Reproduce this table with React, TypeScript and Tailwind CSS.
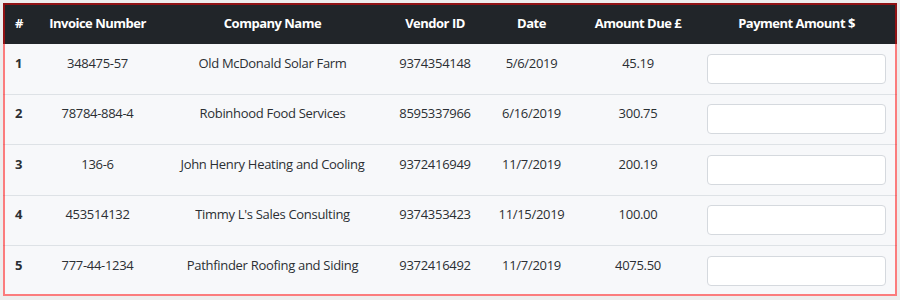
import React from "react";

const rows = [
  { n: 1, inv: "348475-57", company: "Old McDonald Solar Farm", vendor: "9374354148", date: "5/6/2019", amount: "45.19" },
  { n: 2, inv: "78784-884-4", company: "Robinhood Food Services", vendor: "8595337966", date: "6/16/2019", amount: "300.75" },
  { n: 3, inv: "136-6", company: "John Henry Heating and Cooling", vendor: "9372416949", date: "11/7/2019", amount: "200.19" },
  { n: 4, inv: "453514132", company: "Timmy L's Sales Consulting", vendor: "9374353423", date: "11/15/2019", amount: "100.00" },
  { n: 5, inv: "777-44-1234", company: "Pathfinder Roofing and Siding", vendor: "9372416492", date: "11/7/2019", amount: "4075.50" },
];

export default function App() {
  return (
    <div
      className="w-[900px] h-[300px] bg-[#ededed] p-[3px] overflow-hidden"
      style={{ fontFamily: '"Open Sans", "Noto Sans", sans-serif' }}
    >
      <table className="w-[894px] table-fixed border-collapse text-[13px] leading-[19.5px] text-[#2b2f33] bg-[#f7f8fa] outline-2 outline-[rgba(255,0,0,0.5)] -outline-offset-2">
        <colgroup>
          <col className="w-[32px]" />
          <col className="w-[125px]" />
          <col className="w-[225px]" />
          <col className="w-[100px]" />
          <col className="w-[93px]" />
          <col className="w-[120px]" />
          <col className="w-[199px]" />
        </colgroup>
        <thead>
          <tr className="bg-[#212529] text-white h-[41px] tracking-[-0.5px]">
            <th className="pl-[12px] text-left font-bold pt-[1px]">#</th>
            <th className="text-center font-bold pt-[1px]">Invoice Number</th>
            <th className="text-center font-bold pt-[1px]">Company Name</th>
            <th className="text-center font-bold pt-[1px]">Vendor ID</th>
            <th className="text-center font-bold pt-[1px]">Date</th>
            <th className="text-center font-bold pt-[1px]">Amount Due £</th>
            <th className="text-center font-bold pt-[1px] pr-[2px]">Payment Amount $</th>
          </tr>
        </thead>
        <tbody className="tracking-[-0.3px]">
          {rows.map((r, i) => (
            <tr key={r.n} className={i < rows.length - 1 ? "border-b border-[#dee2e6]" : ""}>
              <td className="pl-[12px] pt-[9.75px] align-top font-bold">{r.n}</td>
              <td className="pt-[9.75px] align-top text-center">{r.inv}</td>
              <td className="pt-[9.75px] align-top text-center">{r.company}</td>
              <td className="pt-[9.75px] align-top text-center">{r.vendor}</td>
              <td className="pt-[9.75px] align-top text-center">{r.date}</td>
              <td className="pt-[9.75px] align-top text-center">{r.amount}</td>
              <td className="pl-[9px] pr-[11px] py-[9.75px] align-top">
                <input
                  type="text"
                  className="block w-full h-[30px] bg-white border border-[#d5d9de] rounded-[4px]"
                />
              </td>
            </tr>
          ))}
        </tbody>
      </table>
    </div>
  );
}
